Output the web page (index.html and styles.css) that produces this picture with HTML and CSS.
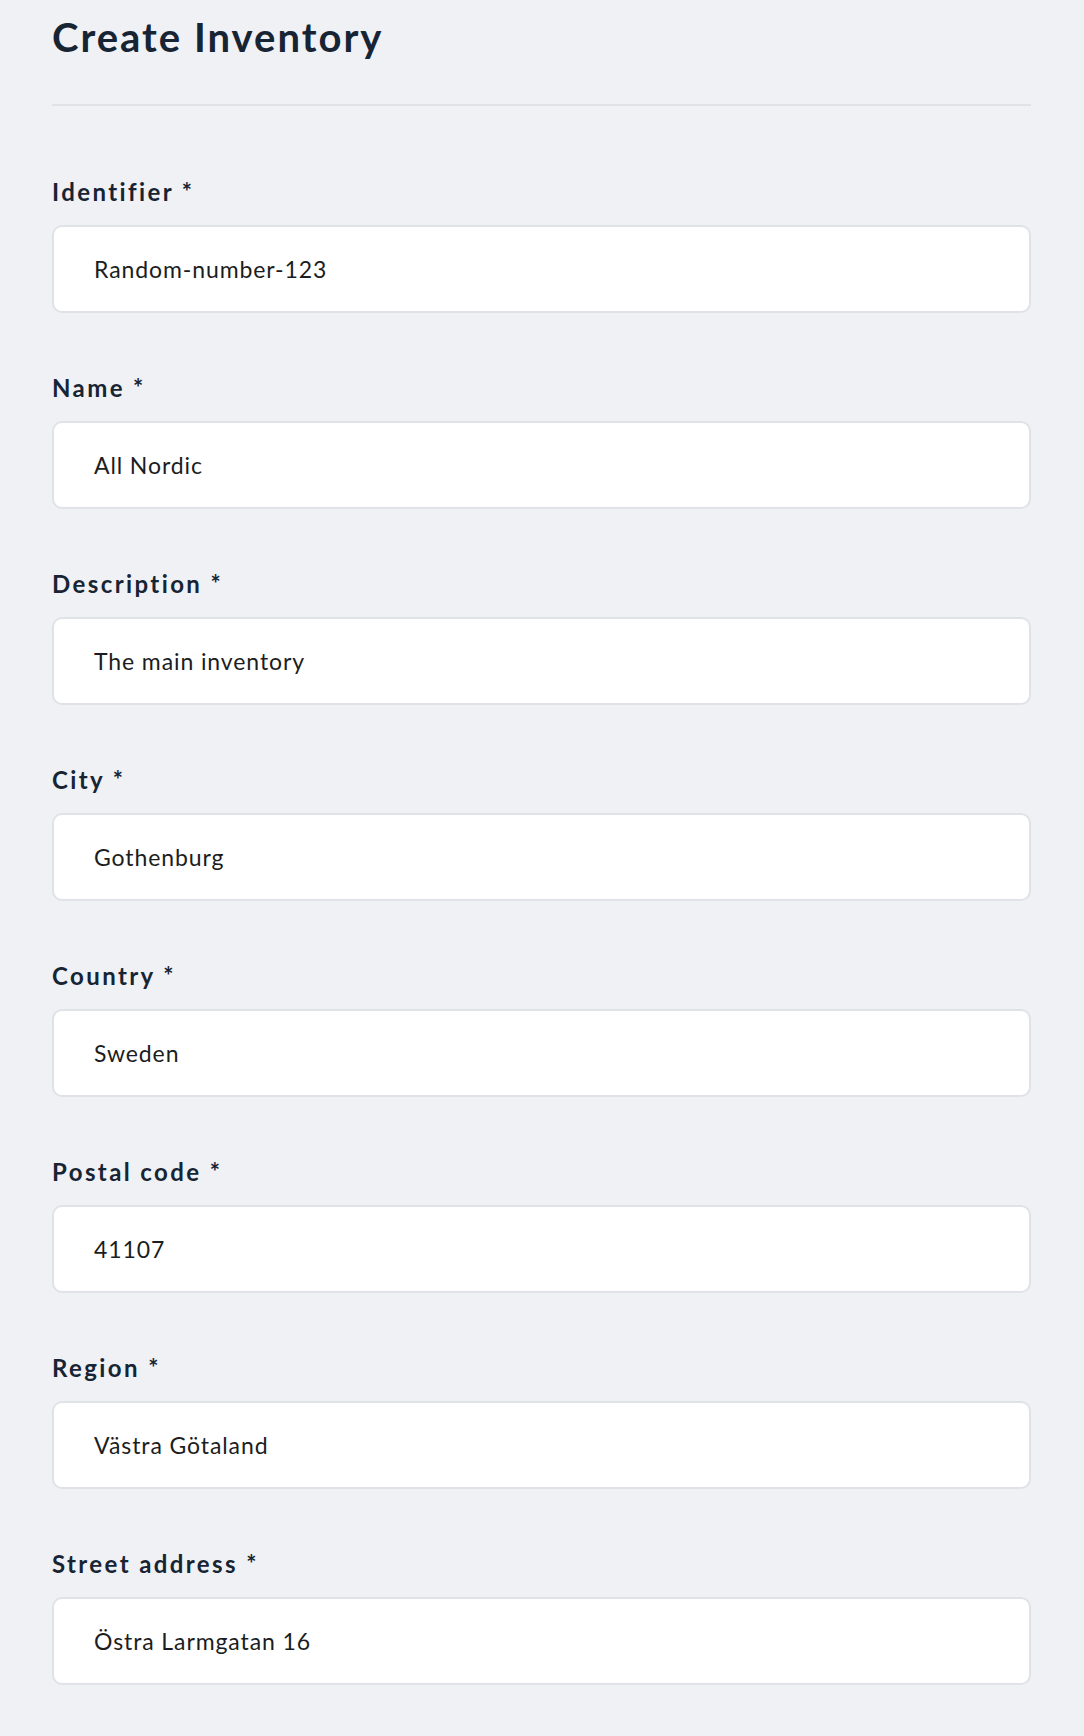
FILE: index.html
```html
<!DOCTYPE html>
<html lang="en">
<head>
<meta charset="utf-8">
<title>Create Inventory</title>
<link rel="stylesheet" href="styles.css">
</head>
<body>
<main class="page">
  <h1 class="title">Create Inventory</h1>
  <hr class="divider">
  <form class="form">
    <div class="field">
      <label class="label" for="f-id">Identifier *</label>
      <input class="input" id="f-id" type="text" value="Random-number-123">
    </div>
    <div class="field">
      <label class="label" for="f-name">Name *</label>
      <input class="input" id="f-name" type="text" value="All Nordic">
    </div>
    <div class="field">
      <label class="label" for="f-desc">Description *</label>
      <input class="input" id="f-desc" type="text" value="The main inventory">
    </div>
    <div class="field">
      <label class="label" for="f-city">City *</label>
      <input class="input" id="f-city" type="text" value="Gothenburg">
    </div>
    <div class="field">
      <label class="label" for="f-country">Country *</label>
      <input class="input" id="f-country" type="text" value="Sweden">
    </div>
    <div class="field">
      <label class="label" for="f-postal">Postal code *</label>
      <input class="input" id="f-postal" type="text" value="41107">
    </div>
    <div class="field">
      <label class="label" for="f-region">Region *</label>
      <input class="input" id="f-region" type="text" value="Västra Götaland">
    </div>
    <div class="field">
      <label class="label" for="f-street">Street address *</label>
      <input class="input" id="f-street" type="text" value="Östra Larmgatan 16">
    </div>
  </form>
</main>
</body>
</html>
```
FILE: styles.css
```css
html, body {
  margin: 0;
  padding: 0;
  background: #eff1f5;
}
body {
  font-family: Lato, "Open Sans", "Liberation Sans", sans-serif;
  color: #172433;
}
.page {
  padding: 13px 53px 0 52px;
}
.title {
  margin: 0;
  font-size: 40px;
  line-height: 48px;
  font-weight: 700;
  color: #172433;
  letter-spacing: 2px;
}
.divider {
  margin: 43px 0 0 0;
  border: 0;
  height: 2px;
  background: #dfe2e7;
}
.form {
  margin-top: 72px;
  display: flex;
  flex-direction: column;
  gap: 61px;
}
.field {
  display: flex;
  flex-direction: column;
}
.label {
  font-size: 24px;
  line-height: 28px;
  font-weight: 700;
  letter-spacing: 2.4px;
  color: #172433;
  margin-bottom: 19px;
}
.input {
  box-sizing: border-box;
  height: 88px;
  width: 100%;
  margin: 0;
  padding: 0 40px;
  border: 2px solid #dfe2e7;
  border-radius: 10px;
  background: #ffffff;
  font-family: Lato, "Open Sans", "Liberation Sans", sans-serif;
  font-size: 23px;
  font-weight: 400;
  letter-spacing: 0.9px;
  color: #1b1d21;
  outline: none;
}
```
